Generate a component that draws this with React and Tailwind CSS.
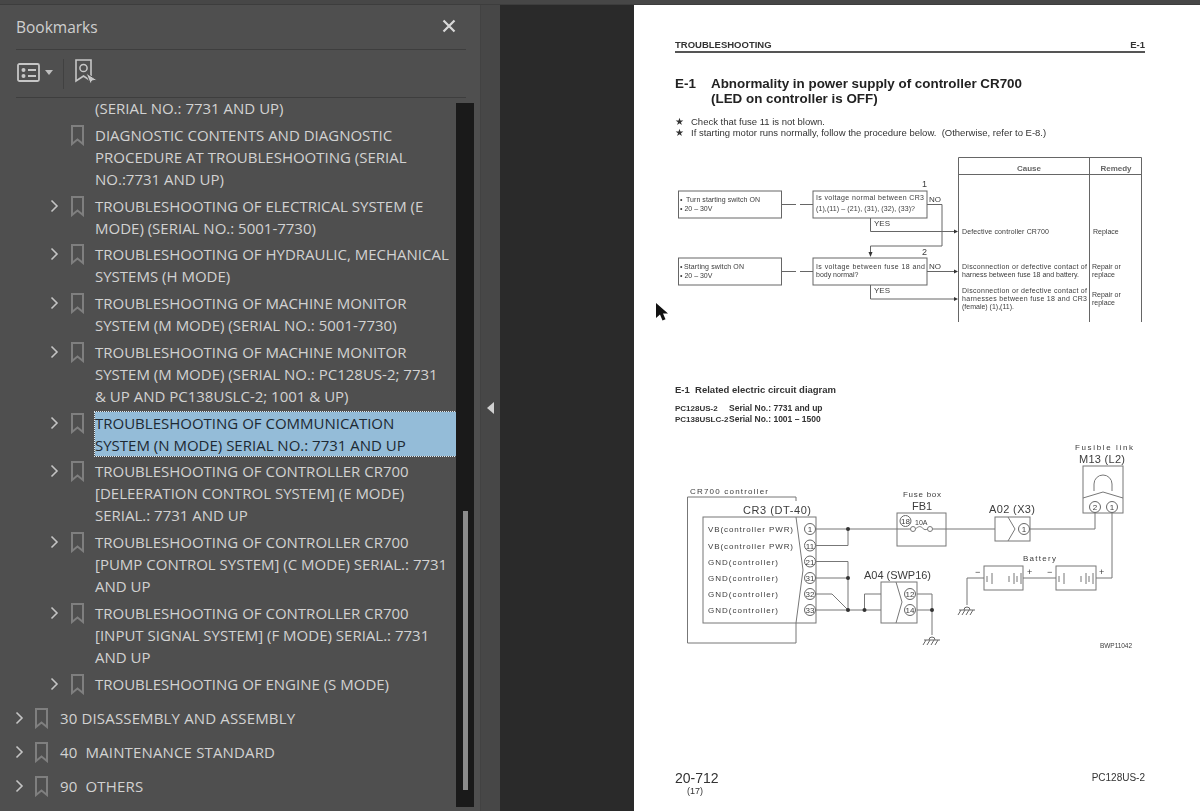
const rows = [
  { lines: ["DIAGNOSTIC CONTENTS AND DIAGNOSTIC", "PROCEDURE AT TROUBLESHOOTING (SERIAL", "NO.:7731 AND UP)"] },
  { arrow: true, lines: ["TROUBLESHOOTING OF ELECTRICAL SYSTEM (E", "MODE) (SERIAL NO.: 5001-7730)"] },
  { arrow: true, lines: ["TROUBLESHOOTING OF HYDRAULIC, MECHANICAL", "SYSTEMS (H MODE)"] },
  { arrow: true, lines: ["TROUBLESHOOTING OF MACHINE MONITOR", "SYSTEM (M MODE) (SERIAL NO.: 5001-7730)"] },
  { arrow: true, lines: ["TROUBLESHOOTING OF MACHINE MONITOR", "SYSTEM (M MODE) (SERIAL NO.: PC128US-2; 7731", "& UP AND PC138USLC-2; 1001 & UP)"] },
  { arrow: true, selected: true, lines: ["TROUBLESHOOTING OF COMMUNICATION", "SYSTEM (N MODE) SERIAL NO.: 7731 AND UP"] },
  { arrow: true, lines: ["TROUBLESHOOTING OF CONTROLLER CR700", "[DELEERATION CONTROL SYSTEM] (E MODE)", "SERIAL.: 7731 AND UP"] },
  { arrow: true, lines: ["TROUBLESHOOTING OF CONTROLLER CR700", "[PUMP CONTROL SYSTEM] (C MODE) SERIAL.: 7731", "AND UP"] },
  { arrow: true, lines: ["TROUBLESHOOTING OF CONTROLLER CR700", "[INPUT SIGNAL SYSTEM] (F MODE) SERIAL.: 7731", "AND UP"] },
  { arrow: true, lines: ["TROUBLESHOOTING OF ENGINE (S MODE)"] },
];

const topRows = ["30 DISASSEMBLY AND ASSEMBLY", "40  MAINTENANCE STANDARD", "90  OTHERS"];

function Chevron() {
  return (
    <svg width="9" height="14" viewBox="0 0 9 14" className="mt-[4px]">
      <path d="M1.5 1.5 7 7l-5.5 5.5" fill="none" stroke="#c4c4c4" strokeWidth="1.6" />
    </svg>
  );
}

function Ribbon() {
  return (
    <svg width="13" height="21" viewBox="0 0 13 21" className="shrink-0 mt-[1px]">
      <path d="M1 1h11v18l-5.5-4.5L1 19z" fill="none" stroke="#7f7f7f" strokeWidth="2" />
    </svg>
  );
}

function BookmarkRow({ item }) {
  return (
    <div className="flex pl-[50px] pb-[4.78px]">
      <div className="w-[21px] shrink-0">{item.arrow && <Chevron />}</div>
      <Ribbon />
      <div
        className={
          item.selected
            ? "ml-[11px] flex-1 bg-[#94bcd8] text-[#1d2933] outline-1 outline-dotted outline-[#dfe8ee]"
            : "ml-[11px] flex-1"
        }
      >
        {item.lines.map((l, i) => (
          <div key={i} className="whitespace-nowrap">{l}</div>
        ))}
      </div>
    </div>
  );
}

function Sidebar() {
  return (
    <aside className="w-[481px] shrink-0 flex flex-col bg-[#4f4f4f] border-r border-[#424242] text-[#d2d2d2] font-['Open_Sans',sans-serif] text-[15px] leading-[22px]">
      <div className="ml-[16px] mr-[14px] h-[45px] flex items-center justify-between border-b border-[#3e3e3e] pb-[1px]">
        <span className="text-[15.5px] text-[#cfcfcf]">Bookmarks</span>
        <svg width="14" height="14" viewBox="0 0 14 14" className="mr-[10px] -mt-[2px]">
          <path d="M1.5 1.5l11 11M12.5 1.5l-11 11" stroke="#d8d8d8" strokeWidth="2.2" />
        </svg>
      </div>
      <div className="ml-[16px] mr-[14px] h-[48px] flex items-center border-b border-[#3e3e3e]">
        <svg width="24" height="20" viewBox="0 0 24 20" className="ml-[1px] -mt-[2px]">
          <rect x="1" y="1" width="21" height="17" rx="1.5" fill="none" stroke="#c6c6c6" strokeWidth="1.8" />
          <circle cx="6.5" cy="7" r="2" fill="#c6c6c6" />
          <circle cx="6.5" cy="13" r="2" fill="#c6c6c6" />
          <path d="M11 7h8M11 13h8" stroke="#c6c6c6" strokeWidth="1.8" />
        </svg>
        <svg width="8" height="5" viewBox="0 0 8 5" className="ml-[4px] -mt-[2px]">
          <path d="M0 0h8L4 5z" fill="#bdbdbd" />
        </svg>
        <div className="ml-[10px] w-px h-[30px] bg-[#414141]" />
        <svg width="24" height="26" viewBox="0 0 24 26" className="ml-[11px] -mt-[3px]">
          <path d="M1 1h15v21l-7.5-5L1 22z" fill="none" stroke="#c6c6c6" strokeWidth="1.6" />
          <circle cx="8.5" cy="9" r="3.6" fill="none" stroke="#c6c6c6" strokeWidth="1.5" />
          <path d="M11 14l11 7-5 1-1.5 3z" fill="#c6c6c6" stroke="#4f4f4f" strokeWidth="1" />
        </svg>
      </div>
      <div className="mt-[5px] flex-1 min-h-0 flex pb-[4px] overflow-hidden">
        <div className="w-[456px] shrink-0 overflow-hidden">
          <div className="-mt-[6px] pl-[95px] pb-[4.78px]">(SERIAL NO.: 7731 AND UP)</div>
          {rows.map((r, i) => (
            <BookmarkRow key={i} item={r} />
          ))}
          <div className="mt-[2px]">
            {topRows.map((t) => (
              <div key={t} className="h-[34px] flex items-center pl-[15px]">
                <div className="w-[20px] shrink-0 -mt-[4px]"><Chevron /></div>
                <Ribbon />
                <span className="ml-[12px] whitespace-pre tracking-[0.15px]">{t}</span>
              </div>
            ))}
          </div>
        </div>
        <div className="w-[18px] shrink-0 bg-[#1a1a1a] pt-[408px] pl-[7px]">
          <div className="w-[5px] h-[279px] bg-[#8c8c8c]" />
        </div>
      </div>
    </aside>
  );
}

function T({ x, y, w, s = 7, b, anchor, fill = "#3c3c3c", children }) {
  return (
    <text
      x={x}
      y={y}
      fontSize={s}
      fontWeight={b ? 700 : 400}
      fill={fill}
      textAnchor={anchor}
      textLength={w}
      lengthAdjust={w ? "spacing" : undefined}
    >
      {children}
    </text>
  );
}

function Arrow({ x, y }) {
  return <path d={`M${x - 4} ${y - 2}l4 2-4 2z`} fill="#333" />;
}

function FlowChart() {
  return (
    <svg width="470" height="175" viewBox="675 150 470 175" className="block font-['Liberation_Sans',sans-serif]">
      <g fill="none" stroke="#666" strokeWidth="1">
        <path d="M958.5 322V157.5H1141.5V322M1089.5 157.5V322M958.5 174.5H1141.5" />
        <rect x="678.5" y="191" width="103" height="27" />
        <rect x="813" y="191" width="114" height="27" />
        <rect x="678.5" y="258" width="103" height="27" />
        <rect x="813" y="258" width="114" height="27" />
        <path d="M782 204.5h14M800 204.5h13M782 271.5h14M800 271.5h13" />
        <path d="M927 204.5h15V246H870.5V255" />
        <path d="M870.5 218V231.5H955" />
        <path d="M927 271.5H955" />
        <path d="M870.5 285V299H955" />
      </g>
      <Arrow x={958} y={231.5} />
      <Arrow x={958} y={271.5} />
      <Arrow x={958} y={299} />
      <path d="M868.5 252l2 5 2-5z" fill="#333" />
      <T x={1029} y={170.5} s={8} b anchor="middle" fill="#666">Cause</T>
      <T x={1116} y={170.5} s={8} b anchor="middle" fill="#666">Remedy</T>
      <T x={680} y={202} s={7}>•</T>
      <T x={686} y={202} w={74} s={7}>Turn starting switch ON</T>
      <T x={680} y={211} s={7}>• 20 – 30V</T>
      <T x={680} y={269} s={7}>•</T>
      <T x={684} y={269} w={60} s={7}>Starting switch ON</T>
      <T x={680} y={278} s={7}>• 20 – 30V</T>
      <T x={816} y={200} w={108} s={7}>Is voltage normal between CR3</T>
      <T x={816} y={211} w={99} s={7}>(1),(11) – (21), (31), (32), (33)?</T>
      <T x={816} y={269} w={109} s={7}>Is voltage between fuse 18 and</T>
      <T x={816} y={277} s={7}>body normal?</T>
      <T x={922} y={187} s={9}>1</T>
      <T x={922} y={255} s={9}>2</T>
      <T x={929} y={202} s={8}>NO</T>
      <T x={929} y={269} s={8}>NO</T>
      <T x={874} y={226} s={8}>YES</T>
      <T x={874} y={293} s={8}>YES</T>
      <T x={962} y={234} w={87} s={7}>Defective controller CR700</T>
      <T x={1093} y={234} s={7}>Replace</T>
      <T x={962} y={269} w={125} s={7}>Disconnection or defective contact of</T>
      <T x={962} y={277} w={117} s={7}>harness between fuse 18 and battery.</T>
      <T x={1092} y={269} s={7}>Repair or</T>
      <T x={1092} y={277} s={7}>replace</T>
      <T x={962} y={293} w={125} s={7}>Disconnection or defective contact of</T>
      <T x={962} y={301} w={125} s={7}>harnesses between fuse 18 and CR3</T>
      <T x={962} y={309} s={7}>(female) (1),(11).</T>
      <T x={1092} y={297} s={7}>Repair or</T>
      <T x={1092} y={305} s={7}>replace</T>
    </svg>
  );
}

function Pin({ x, y, n, s = 8 }) {
  return (
    <g>
      <circle cx={x} cy={y} r="5.5" fill="#fff" stroke="#666" strokeWidth="1" />
      <T x={x} y={y + s / 2 - 1} s={s} anchor="middle">{n}</T>
    </g>
  );
}

function Ground({ x, y }) {
  return (
    <g fill="none" stroke="#666" strokeWidth="1">
      <path d={`M${x - 3} ${y + 5}a3 3 0 0 1 6 0`} />
      <path d={`M${x - 8} ${y + 5}h16M${x - 6} ${y + 5}l-3 5M${x - 2} ${y + 5}l-3 5M${x + 2} ${y + 5}l-3 5M${x + 6} ${y + 5}l-3 5`} />
    </g>
  );
}

function Cells({ x }) {
  return (
    <path
      d={`M${x + 3} 576v6M${x + 8} 573v11M${x + 25} 576v6M${x + 30} 573v11M${x + 33} 576v6M${x + 37} 573v11`}
      stroke="#777"
      strokeWidth="1"
      fill="none"
    />
  );
}

const pinLabels = [
  ["VB(controller PWR)", 529],
  ["VB(controller PWR)", 545.5],
  ["GND(controller)", 561.5],
  ["GND(controller)", 578],
  ["GND(controller)", 594],
  ["GND(controller)", 610],
];

function Circuit() {
  return (
    <svg width="470" height="230" viewBox="675 430 470 230" className="block font-['Liberation_Sans',sans-serif]">
      <g fill="none" stroke="#777" strokeWidth="1">
        <path d="M796 501V497H687.5V643H796V623" />
        <rect x="703" y="517" width="113" height="106" />
        <path d="M796 517l7 53-7 53" />
        <path d="M816 529H897M816 545.5H848V529M816 561.5H848V610M816 578H848M816 594H832L848 610M816 610H881M864.5 610V594H881" />
        <rect x="881" y="582" width="36" height="41" />
        <path d="M896 582l6 20-6 21" />
        <path d="M917 594H932V635M917 610H932" />
        <rect x="897" y="513" width="49" height="33" />
        <path d="M897 529H910.5M932.5 529H995M915.5 529c3-3 5-3 7-1s3 2 5 1" />
        <circle cx="913" cy="529" r="2.5" />
        <circle cx="930" cy="529" r="2.5" />
        <rect x="995" y="517" width="35" height="24" />
        <path d="M1008 517l7 12-7 12" />
        <path d="M1030 529H1095V513" />
        <rect x="1083" y="466" width="40" height="47" />
        <path d="M1094 491V484a9 9 0 0 1 18 0V491" />
        <path d="M1083 498l20-6 20 6" />
        <path d="M1112 513V578H1096M1023 578H1056M984 578H967V605" />
        <rect x="984" y="566" width="39" height="24" />
        <rect x="1056" y="566" width="40" height="24" />
      </g>
      <Cells x={984} />
      <Cells x={1056} />
      <Ground x={967} y={605} />
      <Ground x={932} y={635} />
      <g fill="#333">
        <circle cx="848" cy="529" r="2" />
        <circle cx="848" cy="578" r="2" />
        <circle cx="848" cy="610" r="2" />
        <circle cx="864.5" cy="610" r="2" />
        <circle cx="932" cy="610" r="2" />
      </g>
      <T x={690} y={494} w={78} s={8}>CR700 controller</T>
      <T x={743} y={514} w={68} s={11}>CR3 (DT-40)</T>
      {pinLabels.map(([l, y]) => (
        <T key={y} x={708} y={y + 3} w={l.startsWith("VB") ? 85 : 70} s={8}>{l}</T>
      ))}
      {[["1", 529], ["11", 545.5], ["21", 561.5], ["31", 578], ["32", 594], ["33", 610]].map(([n, y]) => (
        <Pin key={n} x={810} y={y} n={n} />
      ))}
      <T x={864} y={579} w={67} s={11}>A04 (SWP16)</T>
      <Pin x={910} y={594} n="12" />
      <Pin x={910} y={610} n="14" />
      <T x={903} y={497} w={38} s={8}>Fuse box</T>
      <T x={912} y={510} w={20} s={11}>FB1</T>
      <Pin x={905.5} y={521} n="18" />
      <T x={915} y={525} s={7}>10A</T>
      <T x={989} y={513} w={46} s={11}>A02 (X3)</T>
      <Pin x={1024} y={529} n="1" />
      <T x={1075} y={450} w={58} s={8}>Fusible link</T>
      <T x={1079} y={463} w={46} s={11}>M13 (L2)</T>
      <Pin x={1095} y={507} n="2" />
      <Pin x={1112} y={507} n="1" />
      <T x={1023} y={561} w={33} s={8}>Battery</T>
      <T x={975} y={575} s={9}>−</T>
      <T x={1027} y={575} s={9}>+</T>
      <T x={1047} y={575} s={9}>−</T>
      <T x={1099} y={575} s={9}>+</T>
      <T x={1100} y={648} w={32} s={6.5}>BWP11042</T>
    </svg>
  );
}

function Page() {
  return (
    <div className="relative ml-[134px] w-[566px] shrink-0 bg-white text-[#333] font-['Liberation_Sans',sans-serif]">
      <div className="blur-[0.3px] pl-[41px] pr-[55px] pt-[35px]">
        <div className="flex justify-between border-b-2 border-[#555] text-[9.5px] leading-[10px] font-bold pb-[1px] h-[13px]">
          <span>TROUBLESHOOTING</span>
          <span>E-1</span>
        </div>
        <div className="mt-[23px] flex text-[13.4px] leading-[15px] font-bold text-[#222]">
          <span className="w-[36px]">E-1</span>
          <span>
            Abnormality in power supply of controller CR700
            <br />
            (LED on controller is OFF)
          </span>
        </div>
        <div className="mt-[10px] text-[9.5px] leading-[11px] text-[#333]">
          <div className="flex whitespace-pre"><span className="w-[16px]">★</span>Check that fuse 11 is not blown.</div>
          <div className="flex whitespace-pre"><span className="w-[16px]">★</span>If starting motor runs normally, follow the procedure below.  (Otherwise, refer to E-8.)</div>
        </div>
        <div className="mt-[12px]">
          <FlowChart />
        </div>
        <div className="mt-[60px] text-[9.5px] leading-[10px] font-bold whitespace-pre">E-1  Related electric circuit diagram</div>
        <div className="mt-[8px] text-[8.5px] leading-[11px] font-bold whitespace-nowrap">
          <div className="flex"><span className="w-[54px] text-[8px]">PC128US-2</span>Serial No.: 7731 and up</div>
          <div className="flex"><span className="w-[54px] text-[8px]">PC138USLC-2</span>Serial No.: 1001 – 1500</div>
        </div>
        <div className="mt-[5px]">
          <Circuit />
        </div>
        <div className="mt-[110px] flex justify-between items-start">
          <div>
            <div className="text-[14px] leading-[16px]">20-712</div>
            <div className="text-[9px] leading-[10px] pl-[12px]">(17)</div>
          </div>
          <span className="text-[10px] leading-[16px]">PC128US-2</span>
        </div>
      </div>
      <svg width="13" height="19" viewBox="0 0 13 19" className="absolute left-[21px] top-[298px]">
        <path d="M1 0v15l4-3.5 2.5 6 3-1.2-2.5-5.8H13z" fill="#111" />
      </svg>
    </div>
  );
}

export default function App() {
  return (
    <div className="h-[811px] w-[1200px] overflow-hidden bg-[#2a2a2a] flex flex-col">
      <div className="h-[5px] shrink-0 bg-[#474747] border-b border-[#3d3d3d]" />
      <div className="flex-1 min-h-0 flex">
        <Sidebar />
        <div className="w-[19px] shrink-0 bg-[#474747] flex items-center justify-center">
          <svg width="7" height="12" viewBox="0 0 7 12">
            <path d="M7 0v12L0 6z" fill="#d0d0d0" />
          </svg>
        </div>
        <Page />
      </div>
    </div>
  );
}
